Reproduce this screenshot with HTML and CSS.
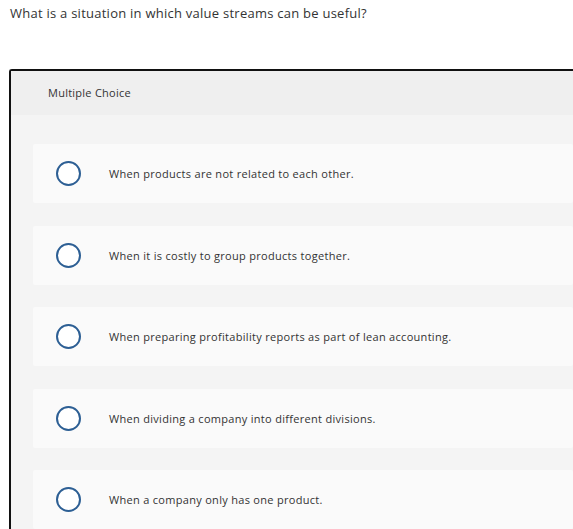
FILE: index.html
```html
<!DOCTYPE html>
<html>
<head>
<meta charset="utf-8">
<link rel="stylesheet" href="styles.css">
</head>
<body>
<p class="question">What is a situation in which value streams can be useful?</p>
<div class="card">
  <div class="card-header">Multiple Choice</div>
  <div class="card-body">
    <div class="option"><span class="radio"></span><span class="label">When products are not related to each other.</span></div>
    <div class="option"><span class="radio"></span><span class="label">When it is costly to group products together.</span></div>
    <div class="option"><span class="radio"></span><span class="label">When preparing profitability reports as part of lean accounting.</span></div>
    <div class="option"><span class="radio"></span><span class="label">When dividing a company into different divisions.</span></div>
    <div class="option"><span class="radio"></span><span class="label">When a company only has one product.</span></div>
  </div>
</div>
</body>
</html>
```
FILE: styles.css
```css
html, body {
  margin: 0;
  padding: 0;
  background: #ffffff;
  font-family: "Open Sans", "Liberation Sans", sans-serif;
  color: #333333;
  overflow: hidden;
}
.question {
  margin: 0;
  padding: 4px 0 0 10px;
  font-size: 13px;
  letter-spacing: 0.25px;
  line-height: 18px;
  height: 69px;
  box-sizing: border-box;
}
.card {
  margin-left: 9px;
  border-top: 2.5px solid #111111;
  border-left: 2px solid #111111;
  border-top-left-radius: 3px;
  background: #f4f4f4;
}
.card-header {
  background: #efefef;
  height: 44px;
  box-sizing: border-box;
  padding-left: 37px;
  padding-bottom: 2px;
  display: flex;
  align-items: center;
  font-size: 11px;
  letter-spacing: 0.25px;
}
.card-body {
  padding: 29px 0 0 22px;
  display: flex;
  flex-direction: column;
  gap: 22.5px;
}
.option {
  height: 59px;
  background: #fafafa;
  border-radius: 2px;
  display: flex;
  align-items: center;
  padding-left: 23px;
}
.radio {
  width: 21px;
  height: 21px;
  border: 2px solid #2d5f94;
  border-radius: 50%;
  background: #ffffff;
  flex: none;
}
.label {
  margin-left: 28px;
  font-size: 11px;
  letter-spacing: 0.3px;
}
```
